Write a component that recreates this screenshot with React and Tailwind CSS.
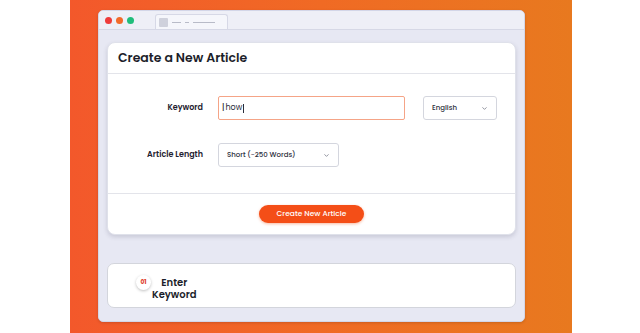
import { ChevronDown } from 'lucide-react';

const font = { fontFamily: '"Poppins", "Open Sans", "Liberation Sans", sans-serif' };

function Field({ label, children }) {
    return (
        <div className="flex items-center">
            <span className="w-[95px] pr-[15px] text-right text-[8px] font-semibold text-[#1f2230]">{label}</span>
            {children}
        </div>
    );
}

function Select({ value, width }) {
    return (
        <div className={`flex h-[24px] items-center justify-between rounded-[3px] border border-[#d4d6de] bg-white pl-[8px] pr-[8px] ${width}`}>
            <span className="text-[7px] font-medium text-[#2a2d3a]">{value}</span>
            <ChevronDown className="h-[7px] w-[7px] text-[#6b6f7d]" strokeWidth={2.5} />
        </div>
    );
}

export default function App() {
    return (
        <div className="flex h-[333px] w-[640px] overflow-hidden bg-white" style={font}>
            <div className="w-[70px] shrink-0 bg-white" />

            {/* orange stage */}
            <div className="flex w-[502px] shrink-0 bg-gradient-to-r from-[#f3582b] via-[#f06a24] to-[#e8791f] pl-[28px] pt-[10px]">
                <div className="flex h-[312px] w-[427px] flex-col overflow-hidden rounded-[5px] border border-[#d3d6e8] bg-[#e7e8f3] shadow-[0_1px_3px_rgba(0,0,0,0.15)]">
                    {/* window bar */}
                    <div className="flex h-[19px] shrink-0 items-end border-b border-[#d6d8e6] bg-[#eeeff7] pl-[6px]">
                        <div className="flex h-full items-center gap-[4px]">
                            <span className="h-[7px] w-[7px] rounded-full bg-[#ee3b3b]" />
                            <span className="h-[7px] w-[7px] rounded-full bg-[#f26a2a]" />
                            <span className="h-[7px] w-[7px] rounded-full bg-[#1fbd7b]" />
                        </div>
                        <div className="ml-[21px] flex h-[15px] w-[73px] items-center gap-[4px] rounded-t-[3px] border border-b-0 border-[#d6d8e6] bg-[#f5f6fb] px-[3px]">
                            <span className="h-[9px] w-[9px] rounded-[1px] bg-[#cfd1dc]" />
                            <span className="h-px w-[9px] bg-[#b8bbc8]" />
                            <span className="h-px w-[4px] bg-[#b8bbc8]" />
                            <span className="h-px w-[22px] bg-[#b8bbc8]" />
                        </div>
                    </div>

                    <div className="flex flex-col px-[8px] pt-[12px]">
                        {/* main card */}
                        <div className="flex h-[193px] w-[409px] flex-col rounded-[8px] border border-[#dfe1ea] bg-white shadow-[0_2px_4px_rgba(60,60,90,0.18)]">
                            <div className="flex h-[31px] shrink-0 items-center border-b border-[#e3e4ea] px-[10px]">
                                <h1 className="text-[12.5px] font-semibold text-[#1c1e2a]">Create a New Article</h1>
                            </div>

                            <div className="flex flex-1 flex-col gap-[23px] pl-[15px] pt-[22px]">
                                <Field label="Keyword">
                                    <div className="flex h-[24px] w-[187px] items-center rounded-[2px] border border-[#f5a487] bg-white pl-[3px]">
                                        <span className="mr-[1px] text-[10px] leading-none text-[#333]">I</span>
                                        <span className="text-[8px] text-[#2a2d3a]">how</span>
                                        <span className="ml-px h-[9px] w-px bg-[#2a2d3a]" />
                                    </div>
                                    <div className="ml-[18px]">
                                        <Select value="English" width="w-[74px]" />
                                    </div>
                                </Field>
                                <Field label="Article Length">
                                    <Select value="Short (~250 Words)" width="w-[121px]" />
                                </Field>
                            </div>

                            <div className="flex h-[41px] shrink-0 items-center justify-center border-t border-[#e3e4ea]">
                                <button className="flex h-[18px] w-[105px] items-center justify-center rounded-full bg-[#f44e17] text-[7.5px] font-medium text-white shadow-[0_1px_3px_rgba(240,80,20,0.4)]">
                                    Create New Article
                                </button>
                            </div>
                        </div>

                        {/* step card */}
                        <div className="mt-[28px] flex h-[45px] w-[409px] items-center rounded-[7px] border border-[#d3d5dc] bg-white pl-[28px]">
                            <span className="mb-[6px] flex h-[15px] w-[15px] items-center justify-center rounded-full bg-white text-[6px] font-bold text-[#e0402a] shadow-[0_1px_3px_rgba(0,0,0,0.25)]">01</span>
                            <div className="ml-[1px] mt-[6px] flex flex-col items-center text-[10px] font-semibold leading-[12px] text-[#1c1e2a]">
                                <span>Enter</span>
                                <span>Keyword</span>
                            </div>
                        </div>
                    </div>
                </div>
            </div>

            <div className="flex-1 bg-white" />
        </div>
    );
}
